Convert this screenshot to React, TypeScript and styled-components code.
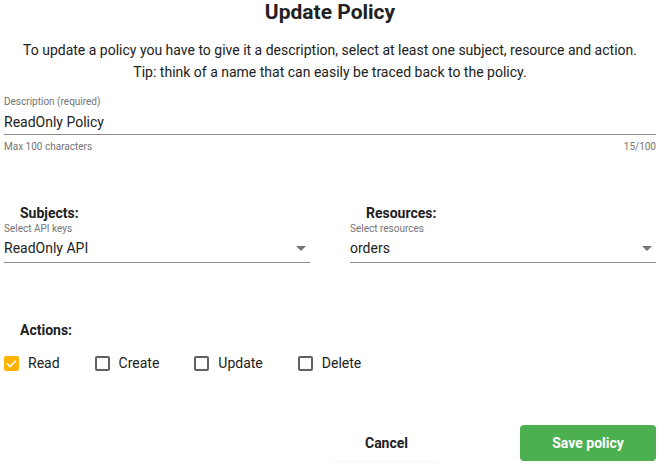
import React from "react";
import styled, { createGlobalStyle } from "styled-components";

const Global = createGlobalStyle`
  body {
    margin: 0;
    background: #ffffff;
    font-family: Roboto, "Liberation Sans", sans-serif;
    color: #212121;
  }
`;

const Page = styled.div`
  width: 661px;
  height: 465px;
  box-sizing: border-box;
  padding: 0 5px 0 4px;
  overflow: hidden;
`;

const Title = styled.h1`
  margin: 0;
  font-size: 21px;
  line-height: 24px;
  font-weight: 700;
  text-align: center;
  color: #212121;
`;

const Intro = styled.p`
  margin: 15px 0 0;
  font-size: 14px;
  line-height: 22px;
  text-align: center;
  color: #212121;
`;

const Field = styled.div`
  display: flex;
  flex-direction: column;
`;

const SmallLabel = styled.div`
  font-size: 10px;
  line-height: 12px;
  color: #757575;
`;

const Value = styled.div`
  font-size: 14px;
  line-height: 20px;
  color: #212121;
  padding: 4px 0 2px;
  border-bottom: 1px solid #8a8a8a;
  display: flex;
  align-items: center;
  justify-content: space-between;
`;

const Helper = styled.div`
  display: flex;
  justify-content: space-between;
  font-size: 10px;
  line-height: 12px;
  color: #757575;
  margin-top: 6px;
`;

const DescField = styled(Field)`
  margin-top: 13px;
`;

const SelectRow = styled.div`
  display: grid;
  grid-template-columns: 306px 306px;
  column-gap: 40px;
  margin-top: 52px;
`;

const Heading = styled.div<{ $top?: number }>`
  font-size: 14px;
  line-height: 16px;
  font-weight: 700;
  padding-left: 16px;
  margin-top: ${(p) => p.$top ?? 0}px;
  color: #212121;
`;

const SelectHeading = styled(Heading)`
  margin-bottom: 2px;
`;

const SelectValue = styled(Value)`
  padding: 3px 0 4px;
`;

const Caret = styled.span`
  width: 0;
  height: 0;
  border-left: 5px solid transparent;
  border-right: 5px solid transparent;
  border-top: 5px solid #757575;
  margin-right: 4px;
`;

const Checks = styled.div`
  display: flex;
  align-items: center;
  margin-top: 17px;
`;

const Check = styled.label`
  display: flex;
  align-items: center;
  gap: 9px;
  font-size: 14px;
  color: #212121;
  margin-right: 35px;
`;

const Box = styled.span<{ $on?: boolean }>`
  width: 15px;
  height: 15px;
  box-sizing: border-box;
  border-radius: 2px;
  border: ${(p) => (p.$on ? "none" : "2px solid #616161")};
  background: ${(p) => (p.$on ? "#ffb300" : "transparent")};
  display: flex;
  align-items: center;
  justify-content: center;
`;

const Footer = styled.div`
  display: flex;
  justify-content: flex-end;
  gap: 80px;
  margin-top: 54px;
`;

const Button = styled.button<{ $primary?: boolean }>`
  height: 36px;
  border: none;
  border-radius: 4px;
  font-family: Roboto, "Liberation Sans", sans-serif;
  font-size: 14px;
  font-weight: 700;
  padding: 0;
  width: ${(p) => (p.$primary ? 136 : 107)}px;
  background: ${(p) => (p.$primary ? "#4caf50" : "#ffffff")};
  color: ${(p) => (p.$primary ? "#ffffff" : "#212121")};
  box-shadow: ${(p) =>
    p.$primary ? "none" : "0 1px 2px rgba(0,0,0,0.04)"};
`;

const actions = [
  { name: "Read", on: true },
  { name: "Create", on: false },
  { name: "Update", on: false },
  { name: "Delete", on: false },
];

export default function App() {
  return (
    <Page>
      <Global />
      <Title>Update Policy</Title>
      <Intro>
        To update a policy you have to give it a description, select at least one subject, resource and action.
        <br />
        Tip: think of a name that can easily be traced back to the policy.
      </Intro>
      <DescField>
        <SmallLabel>Description (required)</SmallLabel>
        <Value>ReadOnly Policy</Value>
        <Helper>
          <span>Max 100 characters</span>
          <span>15/100</span>
        </Helper>
      </DescField>
      <SelectRow>
        <Field>
          <SelectHeading>Subjects:</SelectHeading>
          <SmallLabel>Select API keys</SmallLabel>
          <SelectValue>
            ReadOnly API
            <Caret />
          </SelectValue>
        </Field>
        <Field>
          <SelectHeading>Resources:</SelectHeading>
          <SmallLabel>Select resources</SmallLabel>
          <SelectValue>
            orders
            <Caret />
          </SelectValue>
        </Field>
      </SelectRow>
      <Heading $top={59}>Actions:</Heading>
      <Checks>
        {actions.map((a) => (
          <Check key={a.name}>
            <Box $on={a.on}>
              {a.on && (
                <svg width="11" height="9" viewBox="0 0 11 9">
                  <path d="M1 4.5 L4 7.5 L10 1.5" stroke="#fff" strokeWidth="1.6" fill="none" />
                </svg>
              )}
            </Box>
            {a.name}
          </Check>
        ))}
      </Checks>
      <Footer>
        <Button>Cancel</Button>
        <Button $primary>Save policy</Button>
      </Footer>
    </Page>
  );
}
